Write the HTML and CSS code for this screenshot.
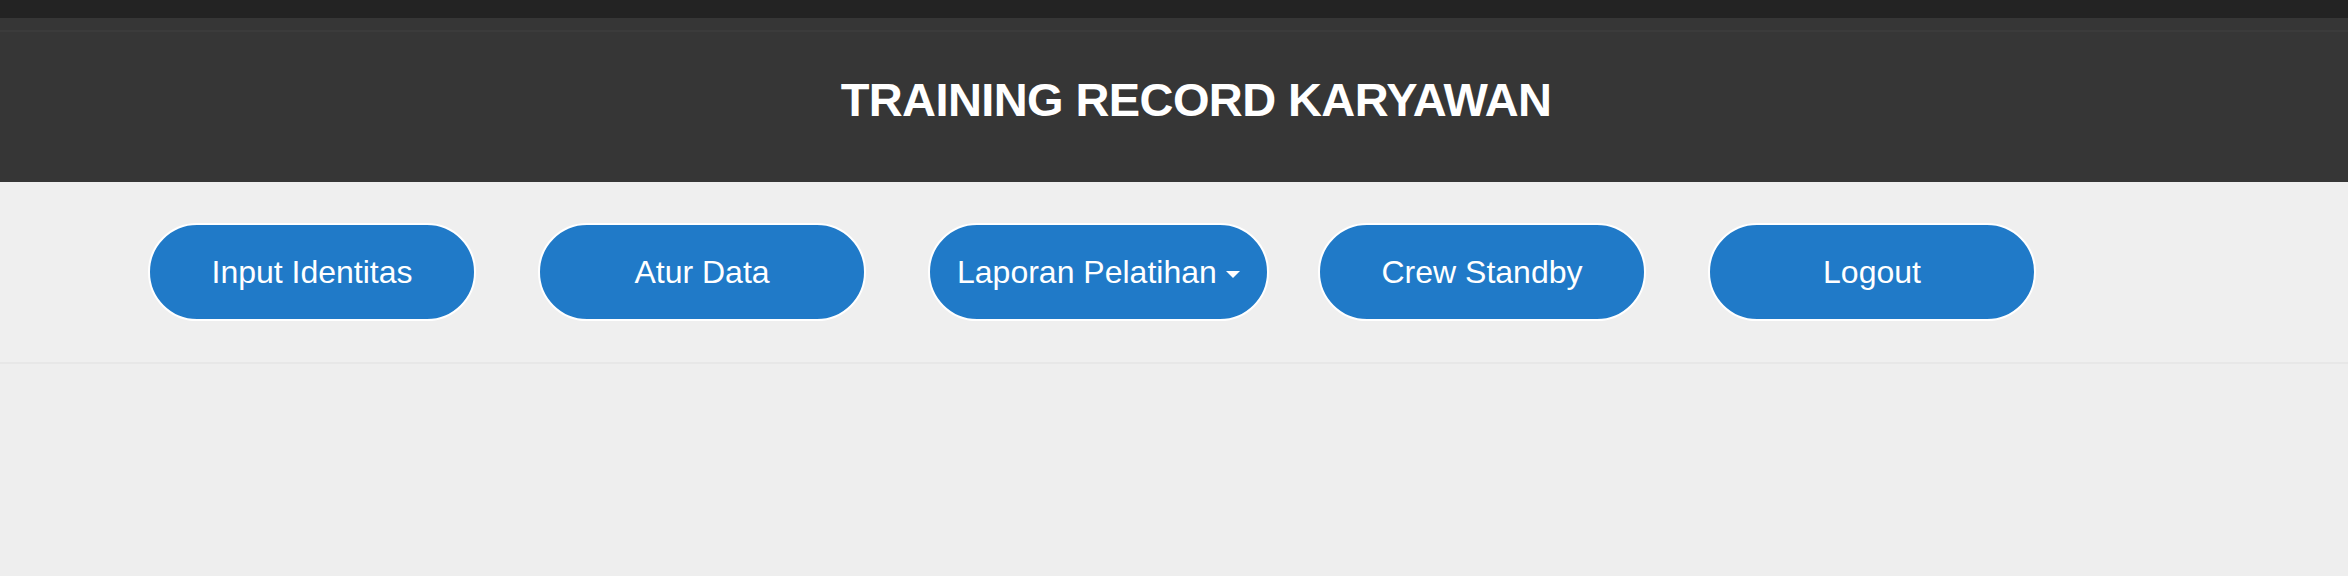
FILE: index.html
```html
<!DOCTYPE html>
<html lang="id">
<head>
<meta charset="utf-8">
<title>Training Record Karyawan</title>
<link rel="stylesheet" href="styles.css">
</head>
<body>
  <div class="topbar"></div>
  <header class="header">
    <h1 class="title">TRAINING RECORD KARYAWAN</h1>
  </header>
  <nav class="nav">
    <div class="nav-cell"><a class="btn" href="#">Input Identitas</a></div>
    <div class="nav-cell"><a class="btn" href="#">Atur Data</a></div>
    <div class="nav-cell"><a class="btn" href="#">Laporan Pelatihan<span class="caret"></span></a></div>
    <div class="nav-cell"><a class="btn" href="#">Crew Standby</a></div>
    <div class="nav-cell"><a class="btn" href="#">Logout</a></div>
  </nav>
  <main class="content"></main>
</body>
</html>
```
FILE: styles.css
```css
html, body {
  margin: 0;
  padding: 0;
  background: #eeeeee;
  font-family: "Liberation Sans", Arial, Helvetica, sans-serif;
}

.topbar {
  height: 18px;
  background: #232323;
}

.header {
  height: 164px;
  display: flex;
  align-items: center;
  justify-content: center;
  padding-left: 44px;
  background: linear-gradient(#363636 12px, #3b3b3b 12px, #3b3b3b 14px, #363636 14px);
}

.title {
  margin: 0;
  color: #ffffff;
  font-size: 47px;
  line-height: 48px;
  font-weight: bold;
  letter-spacing: -0.6px;
}

.nav {
  display: grid;
  grid-template-columns: repeat(5, 390px);
  padding: 41px 0 41px 148px;
  background: #efefef;
  border-bottom: 2px solid #e7e7e7;
}

.nav-cell {
  display: flex;
  align-items: flex-start;
}

.btn {
  box-sizing: border-box;
  min-width: 328px;
  height: 98px;
  padding: 0 27px;
  display: inline-flex;
  align-items: center;
  justify-content: center;
  background: #207ac8;
  color: #ffffff;
  border: 2px solid #ffffff;
  border-radius: 49px;
  font-size: 32px;
  line-height: 32px;
  text-decoration: none;
  white-space: nowrap;
}

.caret {
  display: inline-block;
  width: 0;
  height: 0;
  margin-left: 9px;
  margin-top: 4px;
  border-top: 7px solid #ffffff;
  border-left: 7px solid transparent;
  border-right: 7px solid transparent;
}

.content {
  min-height: 200px;
}
```
